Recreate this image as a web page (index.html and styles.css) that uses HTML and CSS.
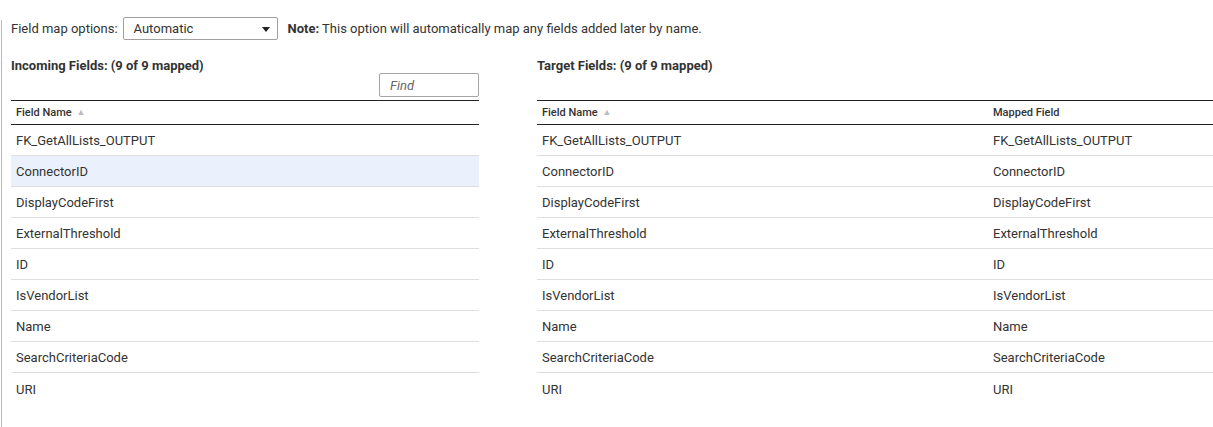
FILE: index.html
```html
<!DOCTYPE html>
<html lang="en">
<head>
    <meta charset="UTF-8">
    <title>Field Map</title>
    <link rel="stylesheet" href="styles.css">
</head>
<body>
    <div class="frame">
        <div class="toolbar">
            <span class="toolbar-label">Field map options:</span>
            <div class="select">
                <span>Automatic</span>
                <span class="caret"></span>
            </div>
            <span class="note"><b>Note:</b> This option will automatically map any fields added later by name.</span>
        </div>

        <div class="panels">
            <!-- incoming -->
            <div class="panel panel-left">
                <div class="panel-head">
                    <div class="panel-title">Incoming Fields: (9 of 9 mapped)</div>
                    <input class="find" type="text" placeholder="Find">
                </div>
                <div class="grid">
                    <div class="grid-header">
                        <div class="cell">Field Name <span class="sort">&#9650;</span></div>
                    </div>
                    <div class="grid-row"><div class="cell">FK_GetAllLists_OUTPUT</div></div>
                    <div class="grid-row selected"><div class="cell">ConnectorID</div></div>
                    <div class="grid-row"><div class="cell">DisplayCodeFirst</div></div>
                    <div class="grid-row"><div class="cell">ExternalThreshold</div></div>
                    <div class="grid-row"><div class="cell">ID</div></div>
                    <div class="grid-row"><div class="cell">IsVendorList</div></div>
                    <div class="grid-row"><div class="cell">Name</div></div>
                    <div class="grid-row"><div class="cell">SearchCriteriaCode</div></div>
                    <div class="grid-row last"><div class="cell">URI</div></div>
                </div>
            </div>

            <!-- target -->
            <div class="panel panel-right">
                <div class="panel-head">
                    <div class="panel-title">Target Fields: (9 of 9 mapped)</div>
                </div>
                <div class="grid">
                    <div class="grid-header">
                        <div class="cell col-name">Field Name <span class="sort">&#9650;</span></div>
                        <div class="cell">Mapped Field</div>
                    </div>
                    <div class="grid-row"><div class="cell col-name">FK_GetAllLists_OUTPUT</div><div class="cell">FK_GetAllLists_OUTPUT</div></div>
                    <div class="grid-row"><div class="cell col-name">ConnectorID</div><div class="cell">ConnectorID</div></div>
                    <div class="grid-row"><div class="cell col-name">DisplayCodeFirst</div><div class="cell">DisplayCodeFirst</div></div>
                    <div class="grid-row"><div class="cell col-name">ExternalThreshold</div><div class="cell">ExternalThreshold</div></div>
                    <div class="grid-row"><div class="cell col-name">ID</div><div class="cell">ID</div></div>
                    <div class="grid-row"><div class="cell col-name">IsVendorList</div><div class="cell">IsVendorList</div></div>
                    <div class="grid-row"><div class="cell col-name">Name</div><div class="cell">Name</div></div>
                    <div class="grid-row"><div class="cell col-name">SearchCriteriaCode</div><div class="cell">SearchCriteriaCode</div></div>
                    <div class="grid-row last"><div class="cell col-name">URI</div><div class="cell">URI</div></div>
                </div>
            </div>
        </div>
    </div>
</body>
</html>
```

FILE: styles.css
```css
body {
    margin: 0;
    font-family: Roboto, Arial, sans-serif;
    font-size: 13px;
    color: #333;
    background: #fff;
    overflow: hidden;
}

.frame {
    position: relative;
    height: 427px;
    padding: 17px 0 0 11px;
    box-sizing: border-box;
}

/* thin rule down the left edge */
.frame::before {
    content: "";
    position: absolute;
    left: 1px;
    top: 20px;
    bottom: 0;
    width: 1px;
    background: #b9b9b9;
}

.toolbar {
    display: flex;
    align-items: center;
    height: 23px;
    margin-bottom: 18px;
}

.toolbar-label {
    margin-right: 5px;
}

.select {
    display: flex;
    align-items: center;
    justify-content: space-between;
    width: 155px;
    height: 23px;
    box-sizing: border-box;
    border: 1px solid #a0a0a0;
    border-radius: 2px;
    padding: 0 7px 0 10px;
    margin-right: 10px;
}

.caret {
    width: 0;
    height: 0;
    border-left: 4px solid transparent;
    border-right: 4px solid transparent;
    border-top: 5px solid #222;
    margin-top: 2px;
}

.note b {
    font-weight: 700;
}

.panels {
    display: flex;
    gap: 58px;
}

.panel-left {
    width: 468px;
}

.panel-right {
    flex: 1;
}

.panel-head {
    display: flex;
    flex-direction: column;
    height: 42px;
}

.panel-title {
    font-size: 13px;
    font-weight: 700;
    line-height: 16px;
}

.find {
    align-self: flex-end;
    width: 100px;
    height: 24px;
    box-sizing: border-box;
    margin-top: -1px;
    border: 1px solid #a5a5a5;
    border-radius: 2px;
    padding: 0 10px;
    font-family: Roboto, Arial, sans-serif;
    font-size: 13px;
    outline: none;
}

.find::placeholder {
    color: #666;
    font-style: italic;
}

.grid {
    border-top: 1px solid #222;
}

.grid-header {
    display: flex;
    height: 23px;
    align-items: center;
    border-bottom: 1px solid #222;
    font-size: 11px;
    font-weight: 500;
}

.sort {
    color: #bdbdbd;
    font-size: 9px;
    margin-left: 2px;
    vertical-align: 1px;
}

.grid-row {
    display: flex;
    align-items: center;
    height: 30px;
    padding-top: 1px;
    box-sizing: border-box;
    height: 31px;
    border-bottom: 1px solid #dedede;
}

.grid-row.last {
    border-bottom: none;
}

.grid-row.selected {
    background: #eaf1fc;
}

.cell {
    padding: 0 5px;
}

.col-name {
    width: 441px;
}
```
